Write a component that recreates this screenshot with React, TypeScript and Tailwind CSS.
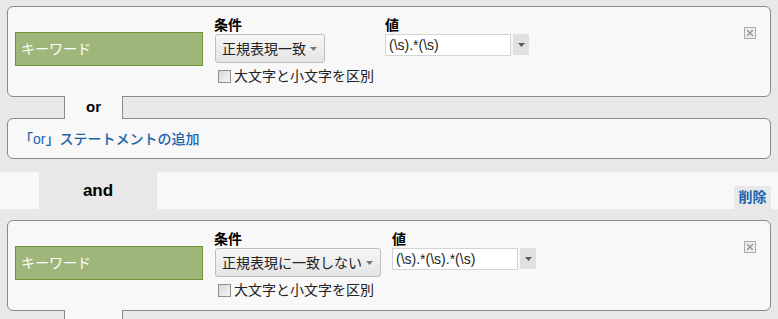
import React from 'react';

const font = "font-['Liberation_Sans','Noto_Sans_CJK_JP',sans-serif]";

function CloseIcon() {
  return (
    <svg width="12" height="12" viewBox="0 0 12 12" className="block">
      <rect x="0.5" y="0.5" width="11" height="11" fill="#f0f0f0" stroke="#aaaaaa" />
      <path d="M3 3 L9 9 M9 3 L3 9" stroke="#9a9a9a" strokeWidth="1.6" />
    </svg>
  );
}

function Caret({color = '#777'}: {color?: string}) {
  return (
    <svg width="7" height="4" viewBox="0 0 7 4" className="block">
      <path d="M0 0 H7 L3.5 4 Z" fill={color} />
    </svg>
  );
}

interface ConditionCardProps {
  operator: string;
  value: string;
}

function ConditionCard({operator, value}: Readonly<ConditionCardProps>) {
  return (
    <div className="mx-[7px] h-[91px] rounded-[6px] border border-[#8a8a8a] bg-[#f8f8f8] flex">
      {/* Field */}
      <div className="ml-[7px] mt-[25px] w-[188px] h-[34px] border border-[#6f9431] bg-[#9fb67b] text-white text-[14px] leading-[32px] pl-[5px]">
        キーワード
      </div>

      {/* Condition */}
      <div className="ml-[11px] mt-[9px] pr-[11px]">
        <div className="text-[14px] font-bold leading-[18px] text-black">条件</div>
        <div className="ml-px h-[29px] inline-flex items-center rounded-[3px] border border-[#bdbdbd] bg-gradient-to-b from-[#f7f7f7] to-[#e4e4e4] pl-[6px] pr-[7px] text-[14px] text-[#222]">
          <span className="leading-[18px]">{operator}</span>
          <span className="ml-[4px]"><Caret /></span>
        </div>
        <label className="mt-[4px] flex items-center text-[14px] leading-[18px] text-[#222]">
          <span className="ml-[4px] w-[13px] h-[13px] border border-[#8f8f8f] bg-gradient-to-br from-[#d8d8d8] to-[#f6f6f6]" />
          <span className="ml-[3px]">大文字と小文字を区別</span>
        </label>
      </div>

      {/* Value */}
      <div className="mt-[9px]">
        <div className="text-[14px] font-bold leading-[18px] text-black">値</div>
        <div className="flex items-start gap-[2px]">
          <div className="w-[126px] h-[22px] border border-[#d4d4d4] bg-white pl-[3px] text-[14px] leading-[20px] text-[#222]">
            {value}
          </div>
          <div className="w-[16px] h-[21px] bg-[#e1e1e1] flex items-center justify-center">
            <Caret color="#5a5a5a" />
          </div>
        </div>
      </div>

      <div className="ml-auto mr-[14px] mt-[20px]">
        <CloseIcon />
      </div>
    </div>
  );
}

function OrTab({height, label}: {height: number; label?: string}) {
  return (
    <div
      className="relative z-10 ml-[64px] -my-px w-[59px] border-x border-[#8a8a8a] bg-[#f8f8f8] flex items-center justify-center text-[15px] font-bold text-black"
      style={{height}}
    >
      {label}
    </div>
  );
}

export default function App() {
  return (
    <div className={`${font} h-[319px] overflow-hidden bg-[#e8e8e8] pt-[6px]`}>
      <ConditionCard operator="正規表現一致" value="(\s).*(\s)" />
      <OrTab height={23} label="or" />

      {/* Add "or" statement */}
      <div className="mx-[7px] h-[41px] rounded-[6px] border border-[#8a8a8a] bg-[#f8f8f8] flex items-center pl-[11px]">
        <span className="text-[14px] leading-[18px] font-medium text-[#1a64ad]">「or」ステートメントの追加</span>
      </div>

      {/* and */}
      <div className="mt-[13px] h-[37px] bg-[#f8f8f8] flex">
        <div className="w-[39px]" />
        <div className="w-[118px] bg-[#e8e8e8] flex items-center justify-center text-[17px] font-bold text-black">
          and
        </div>
        <div className="flex-1 flex items-end justify-end pr-[7px]">
          <div className="w-[37px] h-[23px] bg-[#e8e8e8] flex items-center justify-center text-[14px] font-bold text-[#1a64ad]">
            削除
          </div>
        </div>
      </div>

      <div className="mt-[11px]">
        <ConditionCard operator="正規表現に一致しない" value="(\s).*(\s).*(\s)" />
      </div>
      <OrTab height={12} />
    </div>
  );
}
